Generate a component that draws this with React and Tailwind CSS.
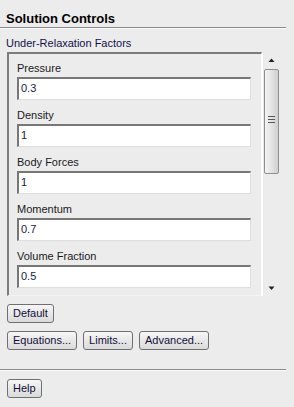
export default function App() {
  const fields = [
    ["Pressure", "0.3"],
    ["Density", "1"],
    ["Body Forces", "1"],
    ["Momentum", "0.7"],
    ["Volume Fraction", "0.5"],
  ];
  const font = { fontFamily: '"Liberation Sans", Arial, sans-serif' };
  const btn =
    "h-[19px] px-[5px] border border-[#707070] rounded-[3px] bg-gradient-to-b from-[#f6f6f6] to-[#dadada] text-[11px] leading-[17px] text-[#10103a]";
  return (
    <div className="w-[294px] h-[407px] bg-[#ececec] overflow-hidden" style={font}>
      <div className="w-[286px]">
        <div className="pt-[11px] pl-[6px] h-[26px] text-[13px] leading-[15px] font-bold text-black">
          Solution Controls
        </div>
        <div className="mt-[1px] h-[1px] bg-[#8c8c8c]" />
        <div className="h-[1px] bg-[#fafafa]" />
        <div className="mt-[8px] pl-[6px] h-[13px] text-[11px] leading-[13px] text-[#12124a]">
          Under-Relaxation Factors
        </div>
        <div className="mt-[2px] ml-[7px] flex h-[244px]">
          <div className="w-[255px] h-full border-t-2 border-l-2 border-[#7c7c7c] border-r border-b border-r-white border-b-[#f4f4f4] overflow-hidden">
            <div className="pt-[8px] pl-[8px] flex flex-col">
              {fields.map(([label, value]) => (
                <div key={label} className="flex flex-col mb-[9px]">
                  <div className="h-[13px] text-[11px] leading-[13px] text-[#1a1a1a]">{label}</div>
                  <div className="mt-[2px] w-[234px] h-[23px] bg-white border-t-2 border-l-2 border-[#777777] border-r border-b border-r-[#dedede] border-b-[#dedede] pl-[2px] text-[11px] leading-[19px] text-[#1a1a40]">
                    {value}
                  </div>
                </div>
              ))}
            </div>
          </div>
          <div className="relative w-[18px] h-full border-l border-white">
            <svg className="absolute left-[5px] top-[6px]" width="7" height="5" viewBox="0 0 7 5">
              <path d="M3.5 0.5 L6.5 4 L0.5 4 Z" fill="#222" />
            </svg>
            <div className="absolute left-[1px] top-[17px] w-[15px] h-[105px] rounded-[2px] border border-[#8e8e8e] bg-gradient-to-r from-[#f4f4f4] via-[#e4e4e4] to-[#cfcfcf]">
              <div className="absolute left-[3px] top-[46px] w-[7px] flex flex-col gap-[2px]">
                <div className="h-[1px] bg-[#555]" />
                <div className="h-[1px] bg-[#555]" />
                <div className="h-[1px] bg-[#555]" />
              </div>
            </div>
            <svg className="absolute left-[5px] top-[234px]" width="7" height="5" viewBox="0 0 7 5">
              <path d="M0.5 0.5 L6.5 0.5 L3.5 4 Z" fill="#222" />
            </svg>
          </div>
        </div>
        <div className="mt-[8px] ml-[7px] flex">
          <button className={btn}>Default</button>
        </div>
        <div className="mt-[8px] ml-[7px] flex gap-[6px]">
          <button className={btn}>Equations...</button>
          <button className={btn}>Limits...</button>
          <button className={btn}>Advanced...</button>
        </div>
        <div className="mt-[19px] h-[1px] bg-[#8c8c8c]" />
        <div className="h-[1px] bg-[#fafafa]" />
        <div className="mt-[8px] ml-[7px] flex">
          <button className={btn}>Help</button>
        </div>
      </div>
    </div>
  );
}
